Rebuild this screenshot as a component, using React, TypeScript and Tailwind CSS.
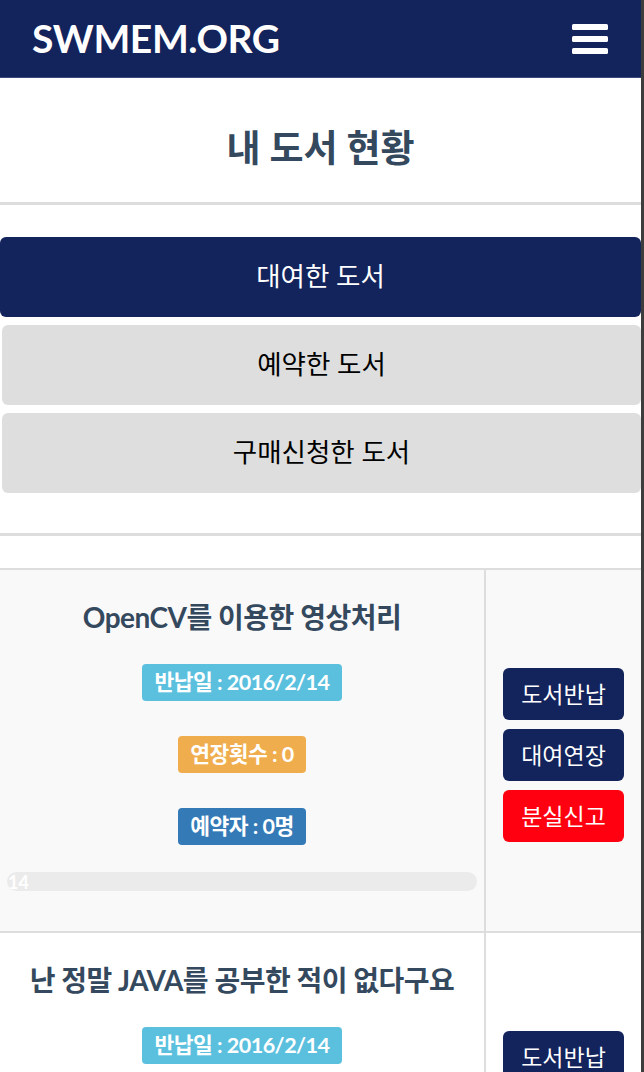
import React from 'react';

type Book = {
  title: string;
  due: string;
  extend: number;
  reserve: number;
  progress: number;
};

const books: Book[] = [
  { title: 'OpenCV를 이용한 영상처리', due: '2016/2/14', extend: 0, reserve: 0, progress: 14 },
  { title: '난 정말 JAVA를 공부한 적이 없다구요', due: '2016/2/14', extend: 0, reserve: 0, progress: 14 },
];

const font = { fontFamily: 'Lato, "Noto Sans CJK KR", sans-serif' };

const Hamburger = () => (
  <svg width="36" height="30" viewBox="0 0 36 30" className="block">
    <rect x="0" y="0" width="36" height="6" rx="1.5" fill="#fff" />
    <rect x="0" y="12" width="36" height="6" rx="1.5" fill="#fff" />
    <rect x="0" y="24" width="36" height="6" rx="1.5" fill="#fff" />
  </svg>
);

const Label = ({ color, children }: { color: string; children: React.ReactNode }) => (
  <span
    className={`inline-flex items-center h-[37px] px-[12px] rounded-[4px] text-white text-[21.5px] font-bold tracking-[-0.5px] ${color}`}
  >
    {children}
  </span>
);

const BookRow = ({ book, striped }: { book: Book; striped: boolean }) => (
  <div className={`flex border-t-2 border-[#dddddd] ${striped ? 'bg-[#f9f9f9]' : 'bg-white'}`}>
    <div className="w-[484px] px-[7px] pt-[29px] pb-[40px] flex flex-col items-center">
      <h3 className="text-[28px] leading-[36px] font-bold text-[#34495e] tracking-[-0.5px] whitespace-nowrap">{book.title}</h3>
      <div className="mt-[29px]">
        <Label color="bg-[#5bc0de]">반납일 : {book.due}</Label>
      </div>
      <div className="mt-[35px]">
        <Label color="bg-[#f0ad4e]">연장횟수 : {book.extend}</Label>
      </div>
      <div className="mt-[35px]">
        <Label color="bg-[#337ab7]">예약자 : {book.reserve}명</Label>
      </div>
      <div className="mt-[27px] w-full h-[19px] rounded-full bg-[#ebebeb] overflow-hidden">
        <div className="h-full flex items-center pl-[1px] text-white text-[18px] font-bold leading-none">
          {book.progress}
        </div>
      </div>
    </div>
    <div className="w-[2px] bg-[#dddddd]" />
    <div className="flex-1 pt-[98px] flex flex-col items-center gap-[9px]">
      <button className="w-[121px] h-[52px] rounded-[6px] bg-[#13235b] text-white text-[23px]">도서반납</button>
      <button className="w-[121px] h-[52px] rounded-[6px] bg-[#13235b] text-white text-[23px]">대여연장</button>
      <button className="w-[121px] h-[52px] rounded-[6px] bg-[#ff0010] text-white text-[23px]">분실신고</button>
    </div>
  </div>
);

export default function App() {
  return (
    <div className="flex h-[1072px] overflow-hidden bg-white" style={font}>
      <div className="w-[641px] shrink-0">
        {/* header */}
        <header className="h-[78px] bg-[#13235b] border-b border-[#3b4a7a] flex items-center justify-between pl-[32px] pr-[33px]">
          <span className="text-white text-[39px] font-bold tracking-[-0.4px] leading-none">SWMEM.ORG</span>
          <Hamburger />
        </header>

        <div className="h-[124px] flex justify-center pt-[48px]">
          <h1 className="text-[37px] leading-[44px] font-bold text-[#34495e]">내 도서 현황</h1>
        </div>
        <div className="h-[3px] bg-[#dddddd]" />

        {/* tabs */}
        <div className="pt-[32px] pb-[40px] flex flex-col gap-[8px]">
          <button className="h-[80px] w-full rounded-[6px] bg-[#13235b] text-white text-[26.5px]">대여한 도서</button>
          <button className="h-[80px] ml-[2px] rounded-[6px] bg-[#dedede] text-black text-[26.5px]">예약한 도서</button>
          <button className="h-[80px] ml-[2px] rounded-[6px] bg-[#dedede] text-black text-[26.5px]">구매신청한 도서</button>
        </div>
        <div className="h-[3px] bg-[#dddddd]" />

        {/* book list */}
        <div className="mt-[32px]">
          {books.map((b, i) => (
            <BookRow key={i} book={b} striped={i % 2 === 0} />
          ))}
        </div>
      </div>
      <div className="flex-1 bg-[#3d3d3d]" />
    </div>
  );
}
